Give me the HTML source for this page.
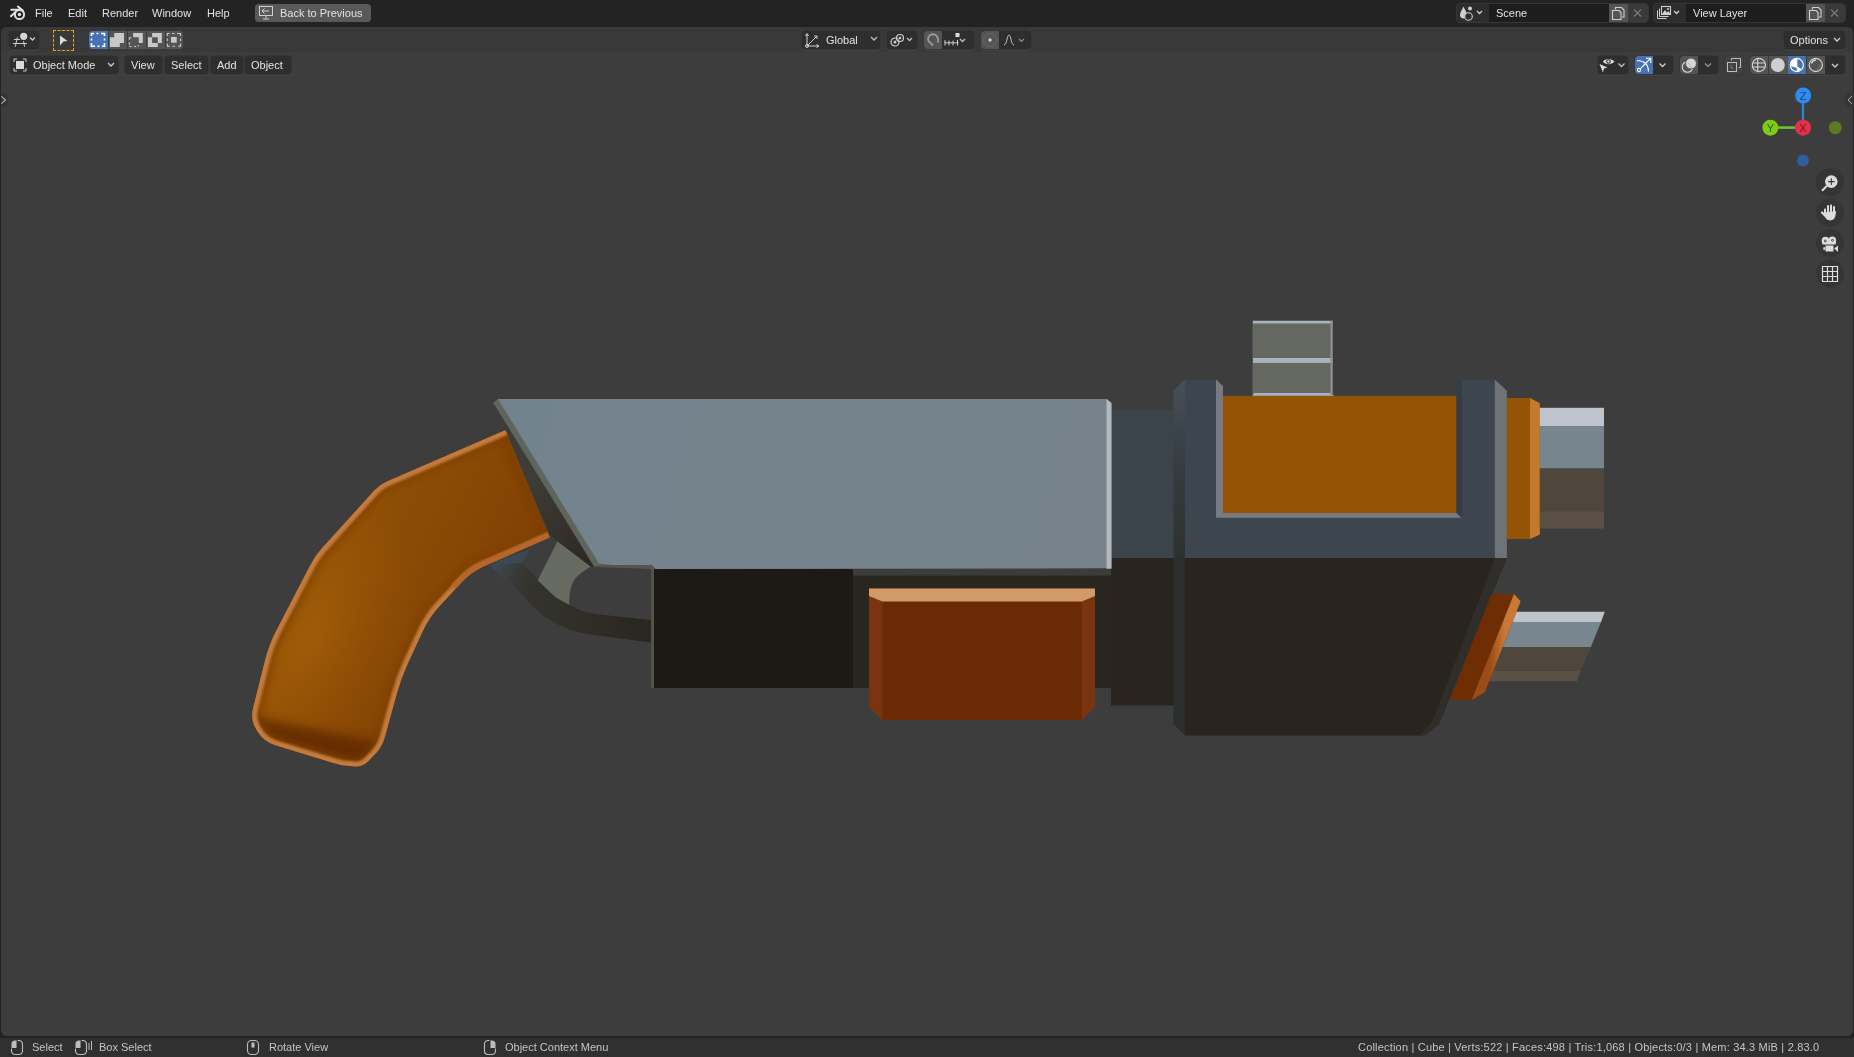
<!DOCTYPE html>
<html><head><meta charset="utf-8">
<style>
*{box-sizing:border-box;margin:0;padding:0}
html,body{width:1854px;height:1057px;overflow:hidden;background:#232323;font-family:"Liberation Sans",sans-serif;font-size:11px;color:#e2e2e2;-webkit-font-smoothing:antialiased}
.a{position:absolute}
#vp{position:absolute;left:1px;top:27px;width:1852px;height:1009px;background:#3d3d3d;border-radius:6px;overflow:hidden}
#th{position:absolute;left:0;top:0;width:1852px;height:25px;background:#393939}
#sb{position:absolute;left:0;top:1038px;width:1854px;height:19px;background:#303030}
.t{position:absolute;white-space:pre;line-height:13px;will-change:transform}
.btn{position:absolute;border-radius:3.5px}
.dk{background:#2e2e2e;box-shadow:0 0 0 1px #363636, 0 1px 0 1px #444}
.md{background:#545454}
.bl{background:#4772b3}
svg{position:absolute;overflow:visible}
</style></head><body>
<!-- top bar -->
<div class="a" style="left:0;top:0;width:1854px;height:26px;background:#232323"></div>
<svg style="left:5px;top:2px" width="25" height="22" viewBox="5 2 25 22"><circle cx="19.5" cy="14.5" r="4.6" fill="none" stroke="#e2e2e2" stroke-width="2"/><circle cx="19.5" cy="14.5" r="1.7" fill="#e2e2e2"/><path d="M11.3 9.8H20.5M17.9 6.6L22.8 10.6M10.9 16.2L15.3 12.3" stroke="#e2e2e2" stroke-width="2" stroke-linecap="round" fill="none"/></svg>
<div class="t" style="left:35px;top:7px">File</div>
<div class="t" style="left:68px;top:7px">Edit</div>
<div class="t" style="left:102px;top:7px">Render</div>
<div class="t" style="left:152px;top:7px">Window</div>
<div class="t" style="left:207px;top:7px">Help</div>
<div class="btn" style="left:255px;top:4px;width:116px;height:18px;background:#595959"></div>
<svg style="left:259px;top:6px" width="15" height="14" viewBox="0 0 15 14"><rect x="0.5" y="0.5" width="13" height="9" fill="none" stroke="#cfcfcf" stroke-width="1"/><path d="M7 10v2.5M4 13h6M3 5h7M5.5 2.5L3 5l2.5 2.5" fill="none" stroke="#cfcfcf" stroke-width="1"/></svg>
<div class="t" style="left:280px;top:7px">Back to Previous</div>

<!-- scene / view layer -->
<div class="btn" style="left:1457px;top:4px;width:191px;height:18px;background:#2d2d2d;box-shadow:0 0 0 1px #363636"></div>
<div class="a" style="left:1489px;top:4px;width:120px;height:18px;background:#1d1d1d"></div>
<div class="a" style="left:1609px;top:4px;width:19px;height:18px;background:#545454"></div>
<div class="btn" style="left:1628px;top:4px;width:20px;height:18px;background:#3a3a3a;border-radius:0 4px 4px 0"></div>
<div class="t" style="left:1496px;top:7px">Scene</div><div class="btn" style="left:1654px;top:4px;width:191px;height:18px;background:#2d2d2d;box-shadow:0 0 0 1px #363636"></div>
<div class="a" style="left:1686px;top:4px;width:120px;height:18px;background:#1d1d1d"></div>
<div class="a" style="left:1806px;top:4px;width:19px;height:18px;background:#545454"></div>
<div class="btn" style="left:1825px;top:4px;width:20px;height:18px;background:#3a3a3a;border-radius:0 4px 4px 0"></div>
<div class="t" style="left:1693px;top:7px">View Layer</div>
<svg style="left:1457px;top:4px" width="32" height="18" viewBox="0 0 32 18"><path d="M6.5 2.5C5 6 3 8 3 11C3 13 4.5 14.5 6.5 14.5C8.5 14.5 10 13 10 11C10 8 8 6 6.5 2.5Z" fill="#cfcfcf"/><circle cx="13" cy="4.5" r="2" fill="#cfcfcf"/><circle cx="11.5" cy="12.5" r="3.8" fill="#2d2d2d" stroke="#cfcfcf" stroke-width="1.1"/><path d="M20 7l2.5 2.5L25 7" stroke="#cfcfcf" stroke-width="1.3" fill="none"/></svg>
<svg style="left:1609px;top:4px" width="39" height="18" viewBox="0 0 39 18"><path d="M6.5 5.5V3.5h6l2.5 2.5v7h-2M3.5 6.5h6.5l2 2v7h-8.5z" stroke="#cfcfcf" stroke-width="1.1" fill="none"/><path d="M25 5.5l7 7M32 5.5l-7 7" stroke="#7c7c7c" stroke-width="1.1"/></svg>
<svg style="left:1654px;top:4px" width="32" height="18" viewBox="0 0 32 18"><path d="M3.5 6.5v8h9M5.5 4.5v8h9" stroke="#cfcfcf" stroke-width="1" fill="none"/><rect x="7.5" y="2.5" width="9" height="8" fill="none" stroke="#cfcfcf" stroke-width="1.1"/><path d="M8 10l3-4 2 2.5 1.5-1.5 2 3z" fill="#cfcfcf"/><circle cx="14" cy="5" r="1" fill="#cfcfcf"/><path d="M20 7l2.5 2.5L25 7" stroke="#cfcfcf" stroke-width="1.3" fill="none"/></svg>
<svg style="left:1806px;top:4px" width="39" height="18" viewBox="0 0 39 18"><path d="M6.5 5.5V3.5h6l2.5 2.5v7h-2M3.5 6.5h6.5l2 2v7h-8.5z" stroke="#cfcfcf" stroke-width="1.1" fill="none"/><path d="M25 5.5l7 7M32 5.5l-7 7" stroke="#7c7c7c" stroke-width="1.1"/></svg>



<!-- viewport -->
<div id="vp"><div id="th"></div></div>



<!-- model -->
<svg style="left:0;top:0" width="1854" height="1057" viewBox="0 0 1854 1057">
<defs>
<radialGradient id="gripg" cx="310" cy="630" r="230" gradientUnits="userSpaceOnUse">
<stop offset="0" stop-color="#9c5907"/><stop offset="0.55" stop-color="#904f05"/><stop offset="1" stop-color="#874604"/>
</radialGradient>
<linearGradient id="slabg" x1="500" y1="400" x2="1110" y2="570" gradientUnits="userSpaceOnUse">
<stop offset="0" stop-color="#73838d"/><stop offset="1" stop-color="#76838b"/>
</linearGradient>
<linearGradient id="gripend" x1="0" y1="0" x2="0" y2="1">
<stop offset="0" stop-color="#7a3a03" stop-opacity="0"/><stop offset="1" stop-color="#6a2a03" stop-opacity="0.9"/>
</linearGradient>
<filter id="soft" x="-10%" y="-10%" width="120%" height="120%"><feGaussianBlur stdDeviation="0.8"/></filter>
<filter id="blur10" x="-50%" y="-50%" width="200%" height="200%"><feGaussianBlur stdDeviation="25"/></filter>
<filter id="blur4" x="-20%" y="-50%" width="140%" height="200%"><feGaussianBlur stdDeviation="5"/></filter>
<radialGradient id="hl"><stop offset="0" stop-color="#a05c08" stop-opacity="1"/><stop offset="1" stop-color="#9e5b08" stop-opacity="0"/></radialGradient>
<linearGradient id="shd" x1="340" y1="580" x2="450" y2="640" gradientUnits="userSpaceOnUse"><stop offset="0" stop-color="#7a3a03" stop-opacity="0"/><stop offset="1" stop-color="#7a3a03" stop-opacity="0.55"/></linearGradient>
<linearGradient id="postl" x1="0" y1="380" x2="0" y2="558" gradientUnits="userSpaceOnUse"><stop offset="0" stop-color="#485058"/><stop offset="0.5" stop-color="#353b3e"/><stop offset="1" stop-color="#2d3230"/></linearGradient>
<linearGradient id="orstrip" x1="1490" y1="0" x2="1505" y2="0" gradientUnits="userSpaceOnUse"><stop offset="0" stop-color="#9c4c18"/><stop offset="1" stop-color="#c77a36"/></linearGradient>
<linearGradient id="wedgeg" x1="530" y1="480" x2="590" y2="560" gradientUnits="userSpaceOnUse"><stop offset="0" stop-color="#3f3c36"/><stop offset="1" stop-color="#2d2a25"/></linearGradient>
<linearGradient id="blueg" x1="500" y1="555" x2="540" y2="580" gradientUnits="userSpaceOnUse"><stop offset="0" stop-color="#3e4a55"/><stop offset="1" stop-color="#35352d" stop-opacity="0"/></linearGradient>
<filter id="blur2" x="-50%" y="-20%" width="200%" height="140%"><feGaussianBlur stdDeviation="2.5"/></filter>
<linearGradient id="guardg" x1="500" y1="0" x2="650" y2="0" gradientUnits="userSpaceOnUse"><stop offset="0" stop-color="#36372f"/><stop offset="1" stop-color="#2a2620"/></linearGradient>
</defs>
<!-- middle dark behind -->
<rect x="853" y="568" width="320" height="120" fill="#29251f"/>
<rect x="853" y="568.8" width="258.7" height="6.8" fill="#3c3c3b"/>
<!-- right of slab dark -->
<rect x="1111" y="410" width="64" height="148" fill="#3b434b"/>
<rect x="1111" y="558" width="64" height="147.5" fill="#29241e"/>
<!-- trigger guard -->
<path d="M496.6 563.7L526.1 599.2Q535.0 610.0 545.4 617.3L546.1 617.7Q556.0 624.6 567.3 628.6L568.7 629.2Q580.0 633.2 591.9 634.8L651.0 642.5Q651.0 642.5 651.0 642.5L651.0 620.0Q651.0 620.0 651.0 620.0L598.9 614.5Q589.0 613.4 579.7 609.9L578.8 609.5Q569.5 606.0 561.8 599.6L548.5 588.5Q537.7 579.6 529.4 571.0L521.0 562.4Q521.0 562.4 521.0 562.4L530.0 548.0Q530.0 548.0 530.0 548.0L496.6 563.7Q496.6 563.7 496.6 563.7Z" fill="url(#guardg)"/>
<path d="M490 566L522 563L530 549L500 560Z" fill="#3c4853"/><path d="M490 566L522 563L538 580L556 598L540 606L510 585Z" fill="url(#blueg)"/>
<path d="M557.5 541.2L590.7 566.4Q590.7 566.4 590.7 566.4L582.6 572.0Q576.0 576.5 573.0 582.2L573.0 582.3Q570.0 588.0 569.5 596.4L569.0 604.8Q569.0 604.8 569.0 604.8L561.5 600.8Q556.2 598.0 551.9 593.9L537.7 580.3Q537.7 580.3 537.7 580.3L557.5 541.2Q557.5 541.2 557.5 541.2Z" fill="#666a60"/>
<!-- dark wedge under slab diagonal -->
<path d="M500 412L594 567L590.7 566.4L557.5 541.2L549.6 534.6Z" fill="url(#wedgeg)"/>
<!-- grip -->
<clipPath id="gripin"><path d="M520 427.7L570 545L470 566L425 612.5L396.5 675L378 744Q375 753 369 758Q362 762 349 760.5L271 738.5Q258 733 255 721L273.5 647L320 560L381 487.9Z"/></clipPath>
<clipPath id="gripclip"><path d="M505.9 431.1L549.4 536.5Q549.8 537.4 548.9 537.8L484.3 565.9Q471.5 571.5 462.0 581.8L439.9 605.7Q429.0 617.4 422.4 632.0L407.6 664.1Q401.0 678.7 396.7 694.1L384.7 737.4Q382.0 747.0 375.0 754.2L368.2 761.3Q362.6 767.0 354.6 766.4L350.0 766.1Q342.0 765.5 334.3 763.2L275.3 745.2Q263.8 741.7 257.5 731.5L256.5 729.8Q250.2 719.6 253.1 708.0L265.1 660.2Q269.0 644.7 276.4 630.5L310.4 564.9Q315.0 556.0 321.7 548.6L374.2 490.6Q379.6 484.7 386.9 481.5L504.6 430.6Q505.5 430.2 505.9 431.1Z"/></clipPath>
<g clip-path="url(#gripclip)">
<rect x="240" y="420" width="330" height="360" fill="#8f4e05"/>
<ellipse cx="315" cy="640" rx="90" ry="150" transform="rotate(25 315 640)" fill="url(#hl)"/>
<rect x="240" y="420" width="330" height="360" fill="url(#shd)"/>
<path d="M250 716L395 746L385 790L240 790Z" fill="#5c2603" opacity="0.75" filter="url(#blur4)"/>
<path d="M505.5 430.2L549.8 537.4L541 540L497 433Z" fill="#7a3c04" opacity="0.5" filter="url(#blur2)"/>
<path d="M556.0 534.7L484.3 565.9Q471.5 571.5 462.0 581.8L439.9 605.7Q429.0 617.4 422.4 632.0L407.6 664.1Q401.0 678.7 396.7 694.1L384.7 737.4Q382.0 747.0 375.0 754.2L368.2 761.3Q362.6 767.0 354.6 766.4L350.0 766.1Q342.0 765.5 334.3 763.2L275.3 745.2Q263.8 741.7 257.5 731.5L256.5 729.8Q250.2 719.6 253.1 708.0L265.1 660.2Q269.0 644.7 276.4 630.5L310.4 564.9Q315.0 556.0 321.7 548.6L374.2 490.6Q379.6 484.7 386.9 481.5L510.0 428.2" fill="none" stroke="#7e3f04" stroke-width="20" stroke-linejoin="round" opacity="0.55" filter="url(#blur2)"/>
<path d="M556.0 534.7L484.3 565.9Q471.5 571.5 462.0 581.8L439.9 605.7Q429.0 617.4 422.4 632.0L407.6 664.1Q401.0 678.7 396.7 694.1L384.7 737.4Q382.0 747.0 375.0 754.2L368.2 761.3Q362.6 767.0 354.6 766.4L350.0 766.1Q342.0 765.5 334.3 763.2L275.3 745.2Q263.8 741.7 257.5 731.5L256.5 729.8Q250.2 719.6 253.1 708.0L265.1 660.2Q269.0 644.7 276.4 630.5L310.4 564.9Q315.0 556.0 321.7 548.6L374.2 490.6Q379.6 484.7 386.9 481.5L510.0 428.2" fill="none" stroke="#c27a3c" stroke-width="10" stroke-linejoin="round" filter="url(#soft)"/>
<path d="M556.0 534.7L484.3 565.9Q471.5 571.5 463.3 580.2L455.0 589.0" fill="none" stroke="#b8652c" stroke-width="10" filter="url(#soft)"/>
</g>
<!-- left dark box -->
<rect x="651" y="569" width="202" height="119" fill="#1d1a16"/>
<rect x="651" y="569" width="3" height="119" fill="#55524a"/>
<!-- slab -->
<path d="M493.2 402.7L498 399L1107 399L1111.5 403L1111.5 568.3L655.6 569L652 565L598.6 565L594.5 567Z" fill="#5f655d"/>
<path d="M498 399L1107 399L1107 568.3L653.6 569L599 563.5Z" fill="url(#slabg)"/>
<path d="M1106.5 399L1111.5 403L1111.5 568.8L1106.5 568.8Z" fill="#b4b7bb"/>
<path d="M594.5 567L598.6 565L652 565L655.6 569L653.6 569Z" fill="#5a554b"/>
<!-- orange box -->
<path d="M869 588.5L1095 588.5L1095 707L1081.8 720L882.5 720L869 707Z" fill="#7a3510"/>
<rect x="882.5" y="601.4" width="199.3" height="118.6" fill="#6a2a04"/>
<path d="M869 588.5L1095 588.5L1095 596L1081.8 601.4L882.5 601.4L869 596Z" fill="#d19b67"/>
<!-- big right box lower body -->
<path d="M1174 558L1506.7 558L1439 724L1424.7 735.5L1185 735.5L1174 724Z" fill="#29241e"/>
<path d="M1495 558L1506.7 558L1439 724L1424.7 735.5L1420 735.5L1433 720Z" fill="#2f2e2a"/>
<path d="M1173.5 558L1185 558L1185 735.5L1173.5 724Z" fill="#2b2f2c"/>
<!-- upper body -->
<path d="M1173.5 390.4L1185 379.6L1216 379.6L1223 386L1223 395.8L1456.5 395.8L1456.5 385.3L1462 379.4L1494.8 379.4L1506.9 390.7L1506.9 558L1173.5 558Z" fill="#3d454e"/>
<path d="M1173.5 390.4L1185 379.6L1185 558L1173.5 558Z" fill="url(#postl)"/>
<path d="M1494.8 379.4L1506.9 390.7L1506.9 558L1494.8 558Z" fill="#6e737a"/>
<rect x="1223" y="395.8" width="233.5" height="117.2" fill="#955305"/>
<path d="M1216 386L1223 386L1223 513L1456.5 513L1461.6 517.8L1216 517.8Z" fill="#767b83"/>
<path d="M1216 379.6L1223 386L1216 386Z" fill="#767b83"/>
<path d="M1456.5 385.3L1462 379.4L1462 517.8L1456.5 513Z" fill="#353c43"/>
<!-- top block -->
<rect x="1252.5" y="320.8" width="80.1" height="75" fill="#656860"/>
<rect x="1253" y="320.8" width="79.6" height="2.7" fill="#a9b3c0"/>
<rect x="1253" y="358" width="79.6" height="4.9" fill="#a9b3c0"/>
<path d="M1252.5 395.8L1254 393L1331 393L1334 395.8Z" fill="#a9b3c0"/>
<rect x="1330.4" y="320.8" width="2.2" height="75" fill="#8c9090"/>
<!-- collar -->
<path d="M1506.9 397.9L1530 397.9L1539.8 403.3L1539.8 534.5L1530 539L1506.9 539Z" fill="#955305"/>
<path d="M1530 397.9L1539.8 403.3L1539.8 534.5L1530 539Z" fill="#c47a2c"/>
<!-- upper barrel -->
<rect x="1539.8" y="407.8" width="64.2" height="18.3" fill="#bfc3cc"/>
<rect x="1539.8" y="426.1" width="64.2" height="42.4" fill="#76858e"/>
<rect x="1539.8" y="468.5" width="64.2" height="42.7" fill="#4f473c"/>
<rect x="1539.8" y="511.2" width="64.2" height="17.4" fill="#5a5046"/>
<!-- lower barrel -->
<path d="M1513 611.8L1604.8 611.8L1600.8 622.6L1509 622.6Z" fill="#bfc3cc"/>
<path d="M1509 622.6L1600.8 622.6L1590.9 646.9L1499 646.9Z" fill="#78868f"/>
<path d="M1499 646.9L1590.9 646.9L1580.9 670.7L1489.5 670.7Z" fill="#4f473b"/>
<path d="M1489.5 670.7L1580.9 670.7L1577 681.3L1485.5 681.3Z" fill="#5a5146"/>
<!-- lower right orange -->
<path d="M1491.5 593.9L1514 593.9L1520.7 601.2L1484.9 692L1471.7 699.9L1449.8 699.9Z" fill="#6f2d03"/>
<path d="M1514 593.9L1520.7 601.2L1484.9 692L1471.7 699.9Z" fill="url(#orstrip)"/>
</svg>

<!-- tool header row -->
<div class="btn dk" style="left:9px;top:31px;width:30px;height:18px"></div>
<svg style="left:0px;top:20px" width="40" height="30" viewBox="0 20 40 30"><circle cx="23.7" cy="36.3" r="3.6" fill="#d4d4d4"/><path d="M14 39.5h6M12.9 43.5h14.1M17.4 37.2l-2.1 9.5M23.5 41.2l1.1 5.5" stroke="#cccccc" stroke-width="1" fill="none"/><path d="M30 37.5l2.5 2.5L35 37.5" stroke="#c8c8c8" stroke-width="1.3" fill="none"/></svg>
<div class="btn" style="left:53px;top:30px;width:21px;height:21px;border:1.3px dashed #f0a020;border-radius:1px"></div>
<svg style="left:59px;top:35px" width="10" height="11" viewBox="0 0 10 11"><path d="M1 0.5L8.5 6L4.5 6.5L1 10.5Z" fill="#dcdcdc"/></svg>
<div class="btn" style="left:89px;top:31px;width:94px;height:18px;background:#545454"></div>
<div class="btn bl" style="left:89px;top:31px;width:18.5px;height:18px;border-radius:4px 0 0 4px"></div>
<div class="a" style="left:108px;top:31px;width:1px;height:18px;background:#3a3a3a"></div>
<div class="a" style="left:127px;top:31px;width:1px;height:18px;background:#3a3a3a"></div>
<div class="a" style="left:146px;top:31px;width:1px;height:18px;background:#3a3a3a"></div>
<div class="a" style="left:165px;top:31px;width:1px;height:18px;background:#3a3a3a"></div>
<svg style="left:85px;top:28px" width="105" height="24" viewBox="85 28 105 24">
<path d="M91.5 36V33.5H94M96.5 33.5h2M101 33.5h3.5V36M104.5 38.5v2M104.5 43v3.2H102M99.5 46.2h-2M95 46.2h-3.5V43M91.5 40.5v-2" stroke="#fff" stroke-width="1.6" fill="none"/>
<path d="M109.9 47V37.3H114.2V33H124V43H119.8V47Z" fill="#c8c8c8"/>
<path d="M133.1 33H142.8V43H138.8V37.3H133.1Z" fill="#c8c8c8"/><path d="M131.5 37.8h-2.1v2M129.4 42.5v2.2M129.4 46.5h2.2M134 46.5h2M138.3 46.5v-1.5" stroke="#c8c8c8" stroke-width="1.1" fill="none"/>
<path d="M147.9 37.3H152.1V33H161.9V43H157.8V47H147.9Z M152.1 37.3V43H157.8V37.3Z" fill="#c8c8c8" fill-rule="evenodd"/>
<path d="M167.3 36V33.5H169.5M172 33.5h2.5M177 33.5h3.5V36M180.5 38.5v2.5M180.5 43.5v2.7H178M175 46.2h-2.5M170 46.2h-2.7V43.5M167.3 41v-2.5" stroke="#c8c8c8" stroke-width="1.1" fill="none"/>
<rect x="171" y="37" width="5.7" height="5.7" fill="#c8c8c8"/>
</svg>

<div class="btn dk" style="left:802px;top:31px;width:78px;height:18px"></div>
<svg style="left:805px;top:32px" width="16" height="16" viewBox="0 0 16 16"><path d="M2 14V2M0.5 4L2 1.5 3.5 4M2 14h12M11.5 12.5L14 14l-2.5 1.5M2 14L12 4M9 4h3v3" stroke="#d0d0d0" stroke-width="1" fill="none"/><circle cx="2" cy="14" r="1.5" fill="none" stroke="#d0d0d0"/></svg>
<div class="t" style="left:826px;top:34px">Global</div>
<svg style="left:870px;top:36px" width="8" height="6" viewBox="0 0 8 6"><path d="M1 1l3 3 3-3" stroke="#bdbdbd" stroke-width="1.3" fill="none"/></svg>
<div class="btn dk" style="left:887px;top:31px;width:30px;height:18px"></div>
<svg style="left:890px;top:33px" width="26" height="14" viewBox="0 0 26 14"><circle cx="5" cy="9" r="4" fill="none" stroke="#d0d0d0" stroke-width="1.2"/><circle cx="5" cy="9" r="1.5" fill="#d0d0d0"/><circle cx="10" cy="5" r="3.5" fill="none" stroke="#d0d0d0" stroke-width="1.2"/><circle cx="10" cy="5" r="1.3" fill="#d0d0d0"/><path d="M17 5l2.5 2.5L22 5" stroke="#bdbdbd" stroke-width="1.3" fill="none"/></svg>
<div class="btn dk" style="left:924px;top:31px;width:50px;height:18px"></div>
<div class="btn md" style="left:924px;top:31px;width:18px;height:18px;border-radius:4px 0 0 4px"></div>
<svg style="left:926px;top:33px" width="46" height="14" viewBox="0 0 46 14"><path d="M7 12.5L3.5 9C1.5 7 1.5 4 4 2.3S9.5 1 11 3.5S12.5 8 11.5 9.5" stroke="#9a9a9a" stroke-width="1.8" fill="none"/><path d="M18.5 9.8h14M19 7v5.5M23 7.5v5M27 7.5v5M31.5 7v5.5" stroke="#cfcfcf" stroke-width="1" fill="none"/><rect x="29.5" y="0" width="4" height="4" fill="#dcdcdc"/><path d="M34 6l2.5 2.5L39 6" stroke="#bdbdbd" stroke-width="1.3" fill="none"/></svg>
<div class="btn dk" style="left:981px;top:31px;width:50px;height:18px"></div>
<div class="btn md" style="left:981px;top:31px;width:18px;height:18px;border-radius:4px 0 0 4px"></div>
<svg style="left:981px;top:31px" width="50" height="18" viewBox="0 0 50 18"><circle cx="9" cy="9" r="6.5" fill="none" stroke="#6c6c6c" stroke-width="0.8"/><circle cx="9" cy="9" r="1.7" fill="#cfcfcf"/><path d="M23 14C26 14 26 4 28 4S30 14 33 14" stroke="#bdbdbd" stroke-width="1" fill="none"/><path d="M38 8l2.5 2.5L43 8" stroke="#8c8c8c" stroke-width="1.2" fill="none"/></svg>
<div class="btn dk" style="left:1784px;top:31px;width:61px;height:18px"></div>
<div class="t" style="left:1790px;top:34px">Options</div>
<svg style="left:1833px;top:37px" width="8" height="6" viewBox="0 0 8 6"><path d="M1 1l3 3 3-3" stroke="#d0d0d0" stroke-width="1.3" fill="none"/></svg>

<!-- header row -->
<div class="btn dk" style="left:10px;top:56px;width:108px;height:18px"></div>
<svg style="left:13px;top:58px" width="14" height="14" viewBox="0 0 14 14"><path d="M1 4V1h3M10 1h3v3M13 10v3h-3M4 13H1v-3" stroke="#cfcfcf" stroke-width="1" fill="none"/><rect x="3" y="3" width="8" height="8" fill="#d8d8d8"/></svg>
<div class="t" style="left:33px;top:59px">Object Mode</div>
<svg style="left:107px;top:62px" width="8" height="6" viewBox="0 0 8 6"><path d="M1 1l3 3 3-3" stroke="#cfcfcf" stroke-width="1.3" fill="none"/></svg>
<div class="btn dk" style="left:125px;top:56px;width:37px;height:18px"></div>
<div class="t" style="left:131px;top:59px">View</div>
<div class="btn dk" style="left:165px;top:56px;width:43px;height:18px"></div>
<div class="t" style="left:171px;top:59px">Select</div>
<div class="btn dk" style="left:211px;top:56px;width:32px;height:18px"></div>
<div class="t" style="left:217px;top:59px">Add</div>
<div class="btn dk" style="left:245px;top:56px;width:46px;height:18px"></div>
<div class="t" style="left:251px;top:59px">Object</div>

<div class="btn dk" style="left:1598px;top:56px;width:30px;height:18px"></div>
<svg style="left:1590px;top:50px" width="40" height="30" viewBox="1590 50 40 30"><path d="M1603 61.5C1605 58 1612 58 1614.3 61.5C1612 65 1605 65 1603 61.5Z" fill="#dadada"/><circle cx="1608.5" cy="61.5" r="2.3" fill="#2b2b2b"/><circle cx="1608.5" cy="61.5" r="1.2" fill="#dadada"/><path d="M1599.5 64L1607.5 67.5L1604 68.5L1603 72.5Z" fill="#dadada"/><path d="M1618.5 63.5l3 3 3-3" stroke="#bdbdbd" stroke-width="1.3" fill="none"/></svg>
<div class="btn dk" style="left:1635px;top:56px;width:38px;height:18px"></div>
<div class="btn bl" style="left:1635px;top:56px;width:18px;height:18px;border-radius:4px 0 0 4px"></div>
<svg style="left:1630px;top:50px" width="45" height="30" viewBox="1630 50 45 30"><circle cx="1639" cy="70" r="1.6" fill="none" stroke="#fff" stroke-width="1.1"/><path d="M1640.2 68.8L1650.5 58.5M1646 58.2h4.8v4.8M1637 60.5Q1648.5 61 1648.5 71.5" stroke="#fff" stroke-width="1.1" fill="none"/><path d="M1659.5 63.5l3 3 3-3" stroke="#cfcfcf" stroke-width="1.3" fill="none"/></svg>
<div class="btn dk" style="left:1680px;top:56px;width:38px;height:18px"></div>
<div class="btn md" style="left:1680px;top:56px;width:18px;height:18px;border-radius:4px 0 0 4px"></div>
<svg style="left:1680px;top:50px" width="40" height="30" viewBox="1680 50 40 30"><circle cx="1687.5" cy="67" r="5.3" stroke="#d6d6d6" stroke-width="1.1" fill="none"/><circle cx="1691" cy="63.5" r="5.4" fill="#d6d6d6" stroke="#545454" stroke-width="0.8"/><path d="M1688.5 63.5l1 1M1690.5 66.5l0.5 1" stroke="#777" stroke-width="0.9"/><path d="M1705 63.5l3 3 3-3" stroke="#9a9a9a" stroke-width="1.2" fill="none"/></svg>
<div class="btn" style="left:1725px;top:56px;width:18px;height:18px;background:#424242;box-shadow:0 0 0 1px #383838"></div>
<svg style="left:1725px;top:56px" width="18" height="18" viewBox="0 0 18 18"><path d="M6.5 4.5V2.5h9v9h-2" stroke="#bdbdbd" stroke-width="1" fill="none"/><rect x="2.5" y="6.5" width="9" height="9" fill="none" stroke="#bdbdbd" stroke-width="1"/><path d="M6 9v3h3" stroke="#bdbdbd" stroke-width="0.8" stroke-dasharray="1 1" fill="none"/></svg>
<div class="btn dk" style="left:1750px;top:56px;width:95px;height:18px"></div>
<div class="btn md" style="left:1750px;top:56px;width:75px;height:18px;border-radius:4px 0 0 4px"></div>
<div class="a bl" style="left:1788px;top:56px;width:18px;height:18px"></div>
<div class="a" style="left:1768px;top:56px;width:1px;height:18px;background:#3a3a3a"></div>
<div class="a" style="left:1806px;top:56px;width:1px;height:18px;background:#3a3a3a"></div>
<svg style="left:1745px;top:52px" width="105" height="26" viewBox="1745 52 105 26">
<circle cx="1758.9" cy="65" r="6.6" fill="none" stroke="#d4d4d4" stroke-width="1.1"/><path d="M1757.7 58.5V71.5M1752.5 63H1765.3M1752.5 67H1765.3" stroke="#d4d4d4" stroke-width="1.1"/>
<circle cx="1777.8" cy="65" r="7" fill="#cfcfcf"/>
<circle cx="1796.8" cy="65" r="6.6" fill="#fff"/><path d="M1797.3 58.4V66.5L1802.2 69.6A6.6 6.6 0 0 0 1797.3 58.4Z" fill="#4772b3"/><path d="M1790.8 66.3L1796.5 67.8L1797 71.6A6.6 6.6 0 0 1 1790.8 66.3Z" fill="#4772b3"/><circle cx="1796.8" cy="65" r="6.6" fill="none" stroke="#fff" stroke-width="1.1"/><path d="M1797 66.5l4 4.5" stroke="#fff" stroke-width="0.9" stroke-dasharray="1.2 0.8"/>
<circle cx="1815.8" cy="65" r="6.6" fill="none" stroke="#d4d4d4" stroke-width="1.1"/><path d="M1811.8 62.8A4.5 4.5 0 0 1 1815.3 60" stroke="#d4d4d4" stroke-width="1.6" fill="none" stroke-linecap="round"/><path d="M1820 64.5l-0.8 0.8M1819.5 67l-0.8 0.8M1818 69l-0.8 0.8M1816 70.3l-0.6 0.6" stroke="#bcbcbc" stroke-width="0.8"/>
<path d="M1832 64l3 3 3-3" stroke="#d0d0d0" stroke-width="1.3" fill="none"/>
</svg>

<!-- side tabs -->
<div class="a" style="left:1px;top:93px;width:7px;height:14px;background:#353535;border-radius:0 4px 4px 0"></div><svg style="left:0px;top:93px" width="8" height="14" viewBox="0 93 8 14"><path d="M1.3 96.3L5.5 100L1.3 103.7" stroke="#b0b0b0" stroke-width="1.1" fill="none"/></svg>
<div class="btn" style="left:1845px;top:93px;width:14px;height:14px;background:#353535"></div>
<svg style="left:1846px;top:94px" width="8" height="12" viewBox="0 0 8 12"><path d="M6 2L2 6l4 4" stroke="#aaa" stroke-width="1" fill="none"/></svg>

<!-- nav gizmo -->
<svg style="left:1760px;top:85px" width="90" height="85" viewBox="1760 85 90 85">
<path d="M1803 95.5V127.7M1770.4 127.7H1803" stroke="#2f83e6" stroke-width="2.2"/>
<path d="M1770.4 127.7H1803" stroke="#7ac516" stroke-width="2.2"/>
<circle cx="1835.3" cy="127.7" r="6.5" fill="#5c7a23"/>
<circle cx="1803" cy="160.4" r="6" fill="#2e5e9d"/>
<circle cx="1803.2" cy="95.5" r="8" fill="#2e8cf0"/>
<circle cx="1770.4" cy="127.7" r="8" fill="#7ccc10"/>
<circle cx="1803" cy="127.7" r="8" fill="#e3314b"/>
<text x="1803.2" y="99.5" font-size="11" text-anchor="middle" fill="#1f3f70" font-family="Liberation Sans">Z</text>
<text x="1770.4" y="131.7" font-size="11" text-anchor="middle" fill="#3b5e0a" font-family="Liberation Sans">Y</text>
<text x="1803" y="131.7" font-size="11" text-anchor="middle" fill="#6e1422" font-family="Liberation Sans">X</text>
</svg>
<svg style="left:1815px;top:167px" width="30" height="122" viewBox="1815 167 30 122">
<circle cx="1830" cy="182.3" r="14" fill="#353535"/><circle cx="1830" cy="212.7" r="14" fill="#353535"/><circle cx="1830" cy="243" r="14" fill="#353535"/><circle cx="1830" cy="273.6" r="14" fill="#353535"/>
<circle cx="1831.3" cy="181.6" r="6.3" fill="#dcdcdc"/><path d="M1828 181.6h6.6M1831.3 178.3v6.6" stroke="#353535" stroke-width="1.1"/><path d="M1822.5 190.2l4-4" stroke="#dcdcdc" stroke-width="2" stroke-linecap="round"/>
<path d="M1825 209.5v6M1828 206v8M1831 205.5v8.5M1834 207v7.5" stroke="#dcdcdc" stroke-width="2" stroke-linecap="round"/><path d="M1824.5 212.5Q1824 220 1830 220.5Q1835 220.5 1835.8 214L1836 211L1824.5 212.5Z" fill="#dcdcdc"/><path d="M1822 212.5L1825 215.5" stroke="#dcdcdc" stroke-width="2.2" stroke-linecap="round"/>
<circle cx="1825.5" cy="240.5" r="3.8" fill="#dcdcdc"/><circle cx="1832.3" cy="240.2" r="3.8" fill="#dcdcdc"/><rect x="1822" y="240.5" width="14" height="4" rx="1.5" fill="#dcdcdc"/><circle cx="1825.3" cy="241" r="1" fill="none" stroke="#353535" stroke-width="0.8"/><circle cx="1832.5" cy="240.3" r="1" fill="none" stroke="#353535" stroke-width="0.8"/><rect x="1825.5" y="245.5" width="8" height="6" fill="#dcdcdc"/><rect x="1823.3" y="247.3" width="2" height="2.5" fill="#dcdcdc"/><path d="M1834.2 248.5L1838 245.5V252Z" fill="#dcdcdc"/>
<path d="M1822.5 266.5h15v15h-15zM1822.5 271.5h15M1822.5 276.5h15M1827.5 266.5v15M1832.5 266.5v15" stroke="#e0e0e0" stroke-width="1.2" fill="none"/>
</svg>

<!-- status bar -->
<div id="sb"></div>

<svg style="left:10px;top:1039px" width="14" height="17" viewBox="0 0 14 17"><path d="M7.5 1.5h1.5a3.5 3.5 0 0 1 3.5 3.5v7a3.5 3.5 0 0 1-3.5 3.5h-4a3.5 3.5 0 0 1-3.5-3.5V9.5" stroke="#bdbdbd" stroke-width="1.1" fill="none"/><path d="M1.5 9V5a3.5 3.5 0 0 1 3.5-3.5h1.5V9z" fill="#bdbdbd"/></svg>
<svg style="left:74px;top:1039px" width="20" height="17" viewBox="0 0 20 17"><path d="M7.5 1.5h1.5a3.5 3.5 0 0 1 3.5 3.5v7a3.5 3.5 0 0 1-3.5 3.5h-4a3.5 3.5 0 0 1-3.5-3.5V9.5" stroke="#bdbdbd" stroke-width="1.1" fill="none"/><path d="M1.5 9V5a3.5 3.5 0 0 1 3.5-3.5h1.5V9z" fill="#bdbdbd"/><path d="M15 4v7M17.5 2v9" stroke="#bdbdbd" stroke-width="1"/></svg>
<svg style="left:246px;top:1039px" width="14" height="17" viewBox="0 0 14 17"><rect x="1.5" y="1.5" width="11" height="14" rx="4" stroke="#bdbdbd" stroke-width="1.1" fill="none"/><rect x="5.5" y="3.5" width="3" height="5" fill="#bdbdbd"/></svg>
<svg style="left:483px;top:1039px" width="14" height="17" viewBox="0 0 14 17"><path d="M6.5 1.5h-1.5a3.5 3.5 0 0 0-3.5 3.5v7a3.5 3.5 0 0 0 3.5 3.5h4a3.5 3.5 0 0 0 3.5-3.5V9.5" stroke="#bdbdbd" stroke-width="1.1" fill="none"/><path d="M12.5 9V5a3.5 3.5 0 0 0-3.5-3.5h-1.5V9z" fill="#bdbdbd"/></svg>
<div class="t" style="left:32px;top:1041px;color:#c4c4c4">Select</div>
<div class="t" style="left:99px;top:1041px;color:#c4c4c4">Box Select</div>
<div class="t" style="left:269px;top:1041px;color:#c4c4c4">Rotate View</div>
<div class="t" style="left:505px;top:1041px;color:#c4c4c4">Object Context Menu</div>
<div class="t" style="left:1358px;top:1041px;letter-spacing:0.19px;color:#c4c4c4">Collection | Cube | Verts:522 | Faces:498 | Tris:1,068 | Objects:0/3 | Mem: 34.3 MiB | 2.83.0</div>
</body></html>
